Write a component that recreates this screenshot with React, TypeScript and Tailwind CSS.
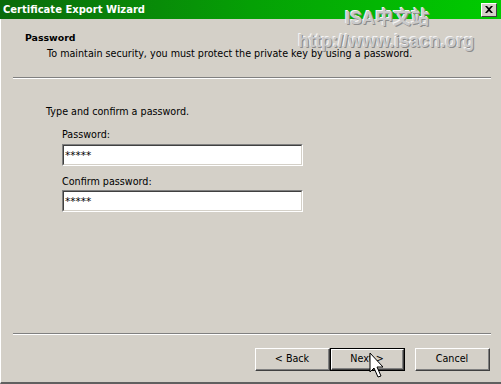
import React from "react";

const font = { fontFamily: '"DejaVu Sans", "Noto Sans CJK SC", sans-serif' };
const wm = { fontFamily: '"Liberation Sans", "Noto Sans CJK SC", sans-serif' };

function Sunken({ value }: { value: string }) {
  return (
    <div className="w-[241px] h-[22px] border-t border-l border-t-[#808080] border-l-[#808080] border-b border-r border-b-white border-r-white">
      <div className="w-full h-full border-t border-l border-t-[#404040] border-l-[#404040] border-b border-r border-b-[#d4d0c8] border-r-[#d4d0c8] bg-white flex items-center pl-[1px]">
        <span className="text-[10.5px] leading-none text-black">{value}</span>
      </div>
    </div>
  );
}

function Btn({ label, def }: { label: string; def?: boolean }) {
  return (
    <div className={def ? "border border-black" : ""}>
      <div
        className={
          (def ? "w-[73px] h-[21px] " : "w-[75px] h-[23px] ") +
          "bg-[#d4d0c8] border-t border-l border-t-white border-l-white border-b border-r border-b-[#404040] border-r-[#404040]"
        }
      >
        <div className="w-full h-full border-b border-r border-b-[#808080] border-r-[#808080] flex items-center justify-center text-[9.6px] text-black">
          {label}
        </div>
      </div>
    </div>
  );
}

export default function App() {
  return (
    <div className="w-[501px] h-[384px] bg-[#d4d0c8] relative overflow-hidden flex flex-col" style={font}>
      <div className="h-[19px] flex items-center justify-between pl-[3px] pr-[4px] bg-gradient-to-r from-[#0a6a0a] via-[#05a005] to-[#00cc00]">
        <span className="text-white font-bold text-[10px] leading-none">Certificate Export Wizard</span>
        <div className="w-[16px] h-[14px] bg-[#d4d0c8] border-t border-l border-t-white border-l-white border-b border-r border-b-[#404040] border-r-[#404040] flex items-center justify-center">
          <svg width="8" height="7" viewBox="0 0 8 7">
            <path d="M0 0h2l2 2 2-2h2L5 3.5 8 7H6L4 5 2 7H0l3-3.5z" fill="#000" />
          </svg>
        </div>
      </div>
      <div className="flex-1 flex flex-col border-l border-l-white border-b-2 border-b-[#606060]">
        <div className="h-[58px] pt-[13px] pl-[24px] flex flex-col">
          <span className="font-bold text-[9.4px] leading-[12px] text-black">Password</span>
          <span className="pl-[22px] mt-[4px] text-[9.6px] leading-[12px] text-black">
            To maintain security, you must protect the private key by using a password.
          </span>
        </div>
        <div className="mx-[12px] mr-[10px] border-t border-t-[#808080] border-b border-b-white" />
        <div className="flex-1 pl-[45px] pt-[27px] flex flex-col">
          <span className="text-[9.6px] leading-[12px] text-black">Type and confirm a password.</span>
          <div className="pl-[16px] pt-[11px] flex flex-col">
            <span className="text-[9.6px] leading-[12px] text-black">Password:</span>
            <div className="mt-[3px]">
              <Sunken value="*****" />
            </div>
            <span className="mt-[10px] text-[9.6px] leading-[12px] text-black">Confirm password:</span>
            <div className="mt-[2px]">
              <Sunken value="*****" />
            </div>
          </div>
        </div>
        <div className="mx-[12px] mr-[10px] border-t border-t-[#808080] border-b border-b-white" />
        <div className="h-[47px] flex items-start pt-[13px] pl-[254px]">
          <Btn label="< Back" />
          <Btn label="Next >" def />
          <div className="ml-[10px]">
            <Btn label="Cancel" />
          </div>
        </div>
      </div>
      <div
        className="absolute left-[345px] top-[9px] text-[18px] leading-none font-bold text-[#cacaca] [text-shadow:1px_1px_0_#8c8c8c,-1px_-1px_0_#f4f4f4]"
        style={wm}
      >
        ISA中文站
      </div>
      <div
        className="absolute left-[298px] top-[32px] text-[18px] leading-none font-bold text-[#cacaca] [text-shadow:1px_1px_0_#8c8c8c,-1px_-1px_0_#f4f4f4]"
        style={wm}
      >
        http://www.isacn.org
      </div>
      <svg className="absolute left-[369px] top-[352px]" width="14" height="26" viewBox="0 0 14 26">
        <path d="M1 1v19l4-4 4 9 3-1-4-9h6z" fill="#fff" stroke="#000" strokeWidth="1" strokeLinejoin="miter" />
      </svg>
    </div>
  );
}
